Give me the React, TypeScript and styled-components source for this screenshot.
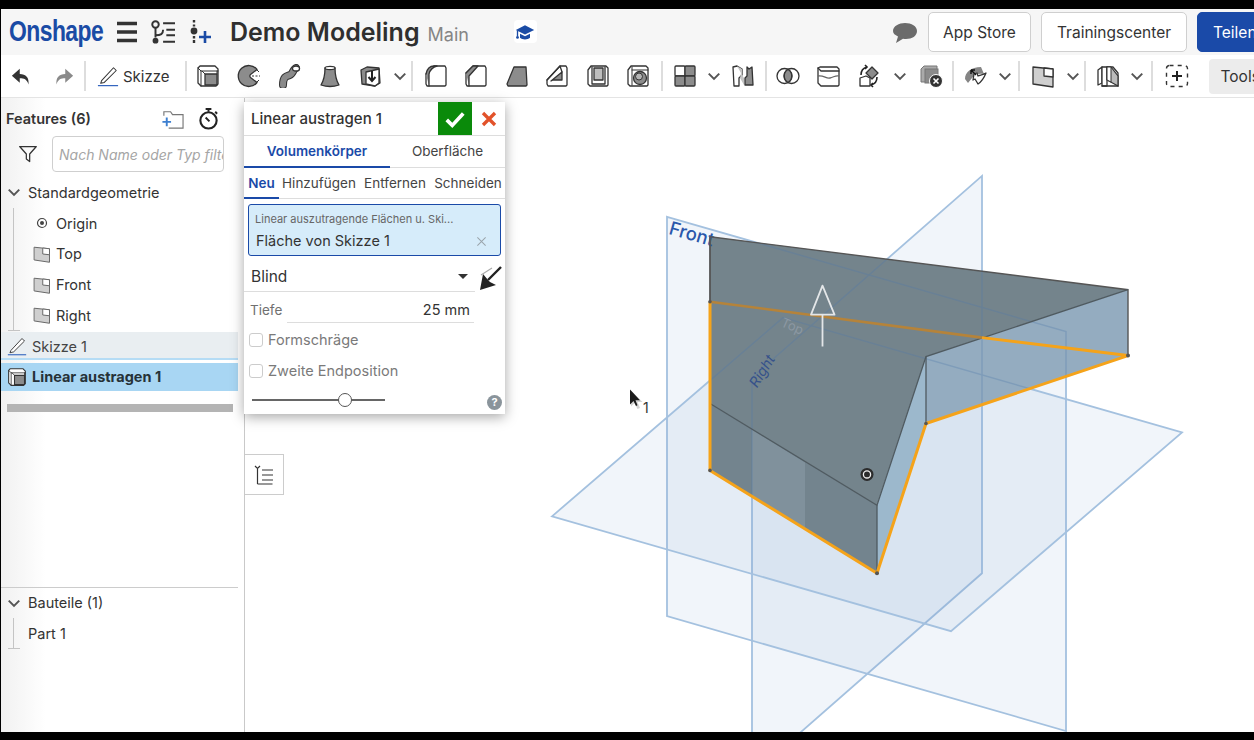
import React from 'react';
import styled, { createGlobalStyle } from 'styled-components';

const GlobalStyle = createGlobalStyle`
    html, body { margin: 0; padding: 0; background: #000; }
    body { font-family: Inter, "Noto Sans", "Liberation Sans", sans-serif; color: #333; }
    * { box-sizing: border-box; }
`;

const Page = styled.div`
    width: 1254px;
    height: 740px;
    padding: 9px 0 8px 1px;
    background: #000;
    display: flex;
    flex-direction: column;
    overflow: hidden;
`;

/* top bar */
const Header = styled.header`
    height: 46px;
    flex: none;
    background: #f6f6f6;
    display: flex;
    align-items: center;
    padding-left: 8px;
    white-space: nowrap;
    overflow: hidden;
`;
const Logo = styled.span`
    display: inline-block;
    width: 94px;
    flex: none;
    font-family: "Liberation Sans", sans-serif;
    font-size: 29px;
    font-weight: 700;
    color: #1a4ba5;
    letter-spacing: -0.7px;
    margin-top: -2px;
    transform: scaleX(0.79);
    transform-origin: left center;
`;
const HeaderIcon = styled.span<{ $left: number }>`
    display: flex;
    flex: none;
    margin-left: ${p => p.$left}px;
`;
const Title = styled.span`
    font-size: 25px;
    font-weight: 600;
    color: #2f2f2f;
    margin-left: 18px;
`;
const Branch = styled.span`
    font-size: 18px;
    color: #858585;
    margin-left: 8px;
    margin-top: 5px;
`;
const CapBox = styled.span`
    width: 23px;
    height: 23px;
    margin-left: 45px;
    margin-top: -1px;
    border-radius: 4px;
    background: #fff;
    display: flex;
    align-items: center;
    justify-content: center;
`;
const HeaderRight = styled.div`
    margin-left: auto;
    display: flex;
    align-items: center;
    gap: 10px;
    width: 362px;
    flex: none;
`;
const ChatIcon = styled.span`
    display: flex;
    margin: 0 1px 0 1px;
`;
const HeaderButton = styled.button<{ $width: number; $primary?: boolean }>`
    width: ${p => p.$width}px;
    height: 40px;
    flex: none;
    border: 1px solid ${p => (p.$primary ? '#1a4aa8' : '#cfcfcf')};
    border-radius: 5px;
    background: ${p => (p.$primary ? '#1a4aa8' : '#fff')};
    color: ${p => (p.$primary ? '#fff' : '#333')};
    font: 400 15.5px Inter, sans-serif;
    padding: ${p => (p.$primary ? '0 0 0 15px' : '0')};
    text-align: ${p => (p.$primary ? 'left' : 'center')};
    white-space: nowrap;
`;

/* toolbar */
const Toolbar = styled.div`
    height: 43px;
    flex: none;
    background: #fff;
    display: flex;
    align-items: center;
    white-space: nowrap;
    overflow: hidden;
    border-bottom: 1px solid #e4e4e4;
`;
const ToolSlot = styled.span<{ $width?: number }>`
    width: ${p => p.$width ?? 40.5}px;
    height: 30px;
    flex: none;
    display: flex;
    align-items: center;
    justify-content: center;
`;
const Separator = styled.span<{ $gap?: number }>`
    width: 2px;
    height: 30px;
    flex: none;
    background: #ddd;
    margin: 0 ${p => p.$gap ?? 2}px;
`;
const SketchButton = styled.span`
    width: 98px;
    flex: none;
    display: flex;
    align-items: center;
    gap: 4px;
    padding-left: 11px;
    font-size: 15px;
    color: #333;
`;
const ToolsButton = styled.span`
    margin-left: 11px;
    width: 60px;
    height: 35px;
    flex: none;
    padding: 8px 0 0 12px;
    background: #ececec;
    border-radius: 4px 0 0 4px;
    font-size: 15.5px;
`;

/* main area */
const Main = styled.main`
    flex: 1;
    min-height: 0;
    display: flex;
    position: relative;
`;
const Sidebar = styled.aside`
    width: 244px;
    flex: none;
    display: flex;
    flex-direction: column;
    background: linear-gradient(90deg, #f1f1f1 0, #fff 45px);
    border-right: 1px solid #c9c9c9;
    font-size: 14.5px;
    padding-right: 6px;
`;
const SidebarHead = styled.div`
    height: 38px;
    display: flex;
    align-items: center;
    padding: 2px 18px 0 5px;
    font-weight: 600;
    color: #333;
`;
const HeadLabel = styled.span`
    flex: 1;
`;
const FilterRow = styled.div`
    height: 36px;
    display: flex;
    align-items: center;
    gap: 14px;
    padding-left: 17px;
`;
const FilterBox = styled.div`
    width: 172px;
    height: 36px;
    border: 1px solid #cfcfcf;
    border-radius: 4px;
    padding: 9px 6px;
    font-size: 14px;
    line-height: 17px;
    font-style: italic;
    color: #a5a5a5;
    background: #fff;
    overflow: hidden;
    white-space: nowrap;
`;
const TreeSection = styled.div`
    margin-top: 5px;
`;
const Row = styled.div<{ $indent?: number }>`
    height: 30.75px;
    display: flex;
    align-items: center;
    padding-left: ${p => p.$indent ?? 0}px;
    color: #333;
`;
const TreeGroup = styled.div`
    position: relative;
    &::before {
        content: '';
        position: absolute;
        left: 12px;
        top: 0;
        bottom: 0;
        width: 1px;
        background: #c4c4c4;
    }
    &::after {
        content: '';
        position: absolute;
        left: 7px;
        bottom: 0;
        width: 12px;
        height: 1px;
        background: #c4c4c4;
    }
`;
const RowIcon = styled.span<{ $width: number; $gap: number }>`
    width: ${p => p.$width}px;
    margin-right: ${p => p.$gap}px;
    flex: none;
    display: flex;
    align-items: center;
    justify-content: center;
`;
const FeatureRow = styled.div<{ $selected?: boolean }>`
    height: 28px;
    display: flex;
    align-items: center;
    gap: 5px;
    padding: ${p => (p.$selected ? '0' : '3px')} 0 0 6px;
    margin-top: ${p => (p.$selected ? 3 : 1)}px;
    background: ${p => (p.$selected ? '#a8d6f3' : '#e9eef1')};
    border-bottom: ${p => (p.$selected ? 'none' : '2px solid #b5dcf5')};
    font-weight: ${p => (p.$selected ? 700 : 400)};
    color: ${p => (p.$selected ? '#263238' : '#444')};
`;
const ScrollTrack = styled.div`
    height: 8px;
    margin: 13px 5px 0 6px;
    background: #b4b4b4;
`;
const PartsSection = styled.div`
    margin-top: auto;
    padding-bottom: 83px;
    border-top: 1px solid #ccc;
`;

/* dialog */
const Dialog = styled.section`
    position: absolute;
    left: 243px;
    top: 4px;
    width: 261px;
    height: 312px;
    background: #fff;
    box-shadow: 0 3px 12px rgba(0, 0, 0, 0.35);
    z-index: 2;
    display: flex;
    flex-direction: column;
`;
const DialogTitle = styled.div`
    height: 34px;
    flex: none;
    display: flex;
    align-items: center;
    padding-left: 7px;
    border-bottom: 1px solid #ddd;
    font-size: 15px;
    font-weight: 500;
    color: #333;
`;
const DialogName = styled.span`
    flex: 1;
`;
const Accept = styled.span`
    width: 34px;
    height: 33px;
    background: #0a8a0a;
    display: flex;
    align-items: center;
    justify-content: center;
`;
const Cancel = styled.span`
    width: 33px;
    display: flex;
    align-items: center;
    justify-content: center;
`;
const TabRow = styled.div<{ $height: number }>`
    height: ${p => p.$height}px;
    flex: none;
    display: flex;
    border-bottom: 1px solid #ddd;
    font-size: 13.5px;
`;
const Tab = styled.span<{ $width: number; $active?: boolean }>`
    width: ${p => p.$width}px;
    flex: none;
    display: flex;
    align-items: center;
    justify-content: center;
    margin-bottom: -1px;
    white-space: nowrap;
    color: ${p => (p.$active ? '#1a4aa8' : '#444')};
    font-weight: ${p => (p.$active ? 600 : 400)};
    border-bottom: 2px solid ${p => (p.$active ? '#1a4aa8' : 'transparent')};
`;
const QueryBox = styled.div`
    margin: 5px 4px 0 4px;
    height: 52px;
    flex: none;
    background: #d6ecfa;
    border: 1px solid #1a4aa8;
    border-radius: 3px;
    padding: 7px 6px 0 6px;
`;
const QueryLabel = styled.div`
    font-size: 11px;
    color: #666;
    line-height: 14px;
`;
const QueryValue = styled.div`
    margin-top: 6px;
    display: flex;
    justify-content: space-between;
    align-items: center;
    font-size: 14.5px;
    line-height: 18px;
    color: #333;
    padding: 0 7px 0 1px;
`;
const SelectRow = styled.div`
    height: 36px;
    flex: none;
    display: flex;
    align-items: center;
    font-size: 15.5px;
    color: #333;
`;
const SelectValue = styled.span`
    position: relative;
    width: 231px;
    height: 36px;
    line-height: 42px;
    padding-left: 7px;
    border-bottom: 1px solid #ddd;
`;
const Caret = styled.span`
    position: absolute;
    right: 7px;
    top: 18px;
    width: 0;
    height: 0;
    border-left: 5px solid transparent;
    border-right: 5px solid transparent;
    border-top: 5px solid #333;
`;
const ArrowFlip = styled.span`
    display: flex;
    margin: 8px 0 0 3px;
`;
const DepthRow = styled.div`
    height: 31px;
    flex: none;
    display: flex;
    align-items: flex-start;
    padding-left: 6px;
`;
const DepthLabel = styled.span`
    width: 37px;
    padding-top: 8px;
    line-height: 20px;
    font-size: 13.5px;
    color: #707070;
`;
const DepthInput = styled.span`
    width: 187px;
    height: 31px;
    padding: 8px 4px 0 0;
    line-height: 20px;
    text-align: right;
    border-bottom: 1px solid #ddd;
    font-size: 14.5px;
    color: #333;
`;
const CheckGroup = styled.div`
    margin-top: 1px;
    flex: none;
`;
const CheckRow = styled.label`
    height: 31px;
    display: flex;
    align-items: center;
    gap: 5px;
    padding-left: 5px;
    font-size: 14.5px;
    color: #7a7a7a;
`;
const CheckBox = styled.span`
    width: 14px;
    height: 14px;
    border: 1px solid #ccc;
    border-radius: 3px;
    background: #fff;
`;
const SliderRow = styled.div`
    flex: 1;
    display: flex;
    align-items: center;
    justify-content: space-between;
    padding: 0 3px 0 8px;
`;
const Slider = styled.div`
    width: 133px;
    height: 2px;
    background: #666;
    position: relative;
`;
const SliderKnob = styled.span`
    position: absolute;
    left: 86px;
    top: -6px;
    width: 14px;
    height: 14px;
    border-radius: 50%;
    background: #fff;
    border: 1.5px solid #555;
`;
const HelpDot = styled.span`
    width: 15px;
    height: 15px;
    margin-top: 5px;
    border-radius: 50%;
    background: #8a949b;
    color: #fff;
    font-size: 11px;
    font-weight: 700;
    line-height: 15px;
    text-align: center;
`;
const ListTab = styled.div`
    position: absolute;
    left: 244px;
    top: 356px;
    width: 39px;
    height: 41px;
    border: 1px solid #ccc;
    border-left: none;
    background: #fff;
    display: flex;
    align-items: center;
    justify-content: center;
    z-index: 1;
`;

/* 3D viewport */
const Viewport = styled.div`
    flex: 1;
    position: relative;
    background: #fff;
    overflow: hidden;
`;
const Scene = styled.svg`
    position: absolute;
    inset: 0;
    width: 100%;
    height: 100%;
`;
const IconSvg = styled.svg`
    flex: none;
`;

const stroke = { fill: 'none', stroke: '#333', strokeWidth: 1.3, strokeLinejoin: 'round' as const, strokeLinecap: 'round' as const };
const face = { ...stroke, fill: '#fff' };
const grey = { ...stroke, fill: '#8c8c8c' };

const Ico: React.FC<{ size?: number; children: React.ReactNode }> = ({ size = 24, children }) => (
    <IconSvg width={size} height={size} viewBox="0 0 24 24">{children}</IconSvg>
);

const PlaneIcon = () => (
    <Ico size={18}>
        <path d="M2 3l20 2v18L2 20z" {...stroke} stroke="#666" fill="#cfcfcf" />
        <path d="M13 4l9 1v8l-9-1z" fill="#fff" stroke="#666" strokeWidth={1.3} />
    </Ico>
);
const PencilIcon: React.FC<{ size?: number }> = ({ size = 22 }) => (
    <Ico size={size}>
        <path d="M5 17L18 3l3 3L8 19l-4 1z" {...stroke} strokeWidth={1.1} fill="#fff" />
        <path d="M1 22.5h22" stroke="#2f62bd" strokeWidth={1.3} />
    </Ico>
);
const ExtrudeIcon: React.FC<{ size?: number }> = ({ size = 24 }) => (
    <Ico size={size}>
        <path d="M4 2h15l3 3v15l-2 2H5l-3-3V4z" {...face} />
        <path d="M2 4l3 3v15M5 7h17" {...stroke} strokeWidth={1} />
        <rect x="9" y="10" width="12" height="11" {...grey} />
        <path d="M6 7l3 3M21 7v3" {...stroke} strokeWidth={1} />
    </Ico>
);
const Chevron: React.FC<{ size?: number }> = ({ size = 14 }) => (
    <Ico size={size}>
        <path d="M3 8l9 9 9-9" fill="none" stroke="#555" strokeWidth={3.4} />
    </Ico>
);
const BoxBase = () => <path d="M5 2h15l2 2v17l-1 1H4l-2-2V6z" {...face} />;

type Tool =
    | { kind: 'icon'; node: React.ReactNode }
    | { kind: 'chevron'; width: number }
    | { kind: 'sep'; gap?: number };
const tool = (node: React.ReactNode): Tool => ({ kind: 'icon', node });
const chevron = (width = 18): Tool => ({ kind: 'chevron', width });
const sep = (gap?: number): Tool => ({ kind: 'sep', gap });

const tools: Tool[] = [
    tool(<ExtrudeIcon />),
    tool(<Ico><path d="M20 5.5A10.5 10.5 0 1 0 20 18.5L13.5 13.5a2 2 0 0 1 0-3z" {...grey} /><path d="M15 12h8" stroke="#333" strokeDasharray="2 1.5" /><path d="M19 5l3 3M19 19l3-3" stroke="#333" /></Ico>),
    tool(<Ico><path d="M6 21c0-9 4-9 7-10s3-6 6-7" fill="none" stroke="#333" strokeWidth={8} strokeLinecap="round" /><path d="M6 21c0-9 4-9 7-10s3-6 6-7" fill="none" stroke="#8a8a8a" strokeWidth={6} strokeLinecap="round" /><ellipse cx="19" cy="4.5" rx="3.5" ry="2.5" {...face} /></Ico>),
    tool(<Ico><path d="M7 4c0 7-1 12-4 17 6 2 12 2 18 0-3-5-4-10-4-17z" {...grey} /><ellipse cx="12" cy="4" rx="5" ry="1.6" {...face} /></Ico>),
    tool(<Ico><path d="M3 6l6-3 12 1 1 15-5 3-13-2z" {...grey} /><path d="M8 8l13-3v14l-4 3-9-2z" {...face} /><path d="M14 7v9M10.5 13l3.5 4 3.5-4" fill="none" stroke="#222" strokeWidth={2} /></Ico>),
    chevron(),
    sep(2.5),
    tool(<Ico><path d="M10 2h11l1 2v17l-1 1H3l-1-2V10z" {...face} /><path d="M2 10c1-5 4-8 8-8h3c-4 1-7 4-8 8v12" {...grey} /></Ico>),
    tool(<Ico><path d="M9 2h12l1 2v17l-1 1H3l-1-2V9z" {...face} /><path d="M2 9l7-7h5L5 12v10" {...grey} /></Ico>),
    tool(<Ico><path d="M9 3h12l1 18-1 1H3l-1-2z" {...grey} /></Ico>),
    tool(<Ico><path d="M15 2h6l1 2v17l-1 1H3l-1-2v-4z" {...face} /><path d="M6 17l11-9v8H8z" {...grey} /><path d="M2 16l13-14 2 6" {...stroke} /></Ico>),
    tool(<Ico><BoxBase /><path d="M6 3v17h13V3" {...stroke} /><path d="M8 4h9v12H8z" {...grey} fill="#bdbdbd" /></Ico>),
    tool(<Ico><BoxBase /><path d="M6 3v18M6 6h16" {...stroke} strokeWidth={1} /><circle cx="14" cy="14" r="6.5" {...grey} /><circle cx="13" cy="12.5" r="3.5" fill="#b5b5b5" stroke="#333" /></Ico>),
    sep(2),
    tool(<Ico><rect x="2" y="2" width="10" height="10" rx="1" {...face} /><rect x="12" y="2" width="10" height="10" rx="1" {...grey} /><rect x="2" y="12" width="10" height="10" rx="1" {...grey} /><rect x="12" y="12" width="10" height="10" rx="1" {...grey} /></Ico>),
    chevron(),
    tool(<Ico><path d="M2 3l4-1 5 3v6l-3 3v8H3z" {...face} /><path d="M6 2l5 3v6l2 3v7l-4-7 1-5z" fill="#c4c4c4" /><path d="M14 21v-7l2-2V3l2 2 3-2 1 18z" {...grey} /></Ico>),
    sep(1),
    tool(<Ico><circle cx="8.5" cy="12" r="7.5" {...face} /><circle cx="15.5" cy="12" r="7.5" {...stroke} /><path d="M12 5.5a7.5 7.5 0 0 1 0 13 7.5 7.5 0 0 1 0-13z" {...grey} /></Ico>),
    tool(<Ico><path d="M4 3h17l2 2v16l-1 1H5l-3-3V4z" {...face} /><path d="M2 4l3 3h18" {...stroke} /><path d="M2 12c6-1 8 3 12 2s6-3 9-2" fill="none" stroke="#666" strokeWidth={1.3} /></Ico>),
    tool(<Ico><path d="M3 14l6-2 4 2v8H3z" {...face} /><path d="M15 3l6 6-6 6-6-6z" {...grey} /><path d="M4 11c0-4 2-7 6-8M20 13c0 4-2 7-6 8" fill="none" stroke="#222" strokeWidth={1.6} /><path d="M8 1l2 2-2 2M16 19l-2 2 2 2" fill="none" stroke="#222" strokeWidth={1.6} /></Ico>),
    chevron(22),
    tool(<Ico><path d="M2 5l3-3h13v6H7v10H2z" fill="#aaa" stroke="#777" /><rect x="6" y="5" width="13" height="14" fill="#8b8b8b" stroke="#777" /><circle cx="17" cy="17" r="6.5" fill="#333" stroke="#fff" /><path d="M14.5 14.5l5 5M19.5 14.5l-5 5" stroke="#fff" strokeWidth={1.6} /></Ico>),
    sep(0.5),
    tool(<Ico><path d="M2 15C2 8 8 3 18 3l3 7c-6-1-10 1-12 4l-4 5z" fill="#858585" /><path d="M11 10l-1 6 2-1 3 5c3-2 6-6 8-11-3 2-6 2-8 3l-1-3z" {...face} /><path d="M8 6l5 5M8 6v4M8 6h4" stroke="#111" strokeWidth={1.4} fill="none" /></Ico>),
    chevron(20),
    sep(3),
    tool(<Ico><path d="M2 3l20 2v18L2 20z" {...stroke} fill="#cfcfcf" /><path d="M13 4l9 1v8l-9-1z" {...face} /></Ico>),
    chevron(),
    sep(2),
    tool(<Ico><path d="M2 6l4-3v16l-4 2z" {...face} /><path d="M6 3l11 0 5 6v13H6z" {...face} /><path d="M11 3v13l11 6V12L15 3z" fill="#bbb" stroke="#333" strokeWidth={1.2} /><path d="M11 3v19h-5" {...stroke} /><path d="M15 3h-4v13l4 2z" fill="#fff" stroke="#333" strokeWidth={1} /></Ico>),
    chevron(),
    sep(4.5),
    tool(<Ico><rect x="1.5" y="1.5" width="21" height="21" rx="3" fill="none" stroke="#333" strokeWidth={1.4} strokeDasharray="4 4.2" /><path d="M12 7v10M7 12h10" stroke="#222" strokeWidth={2} /></Ico>),
];

const Toolset: React.FC = () => (
    <>
        {tools.map((item, index) => {
            if (item.kind === 'sep') return <Separator key={index} $gap={item.gap} />;
            if (item.kind === 'chevron') return <ToolSlot key={index} $width={item.width}><Chevron /></ToolSlot>;
            return <ToolSlot key={index}>{item.node}</ToolSlot>;
        })}
    </>
);

const planeLine = '#a4c1df';
const planes = [
    '982,175 982,573 752,775 752,377',
    '667,216 1066,331 1066,731 667,616',
    '552,516 783,317 1182,432 951,631',
];

const Model: React.FC = () => (
    <Scene viewBox="245 97 1009 635" preserveAspectRatio="none">
        <defs>
            <clipPath id="solid-outline">
                <polygon points="710,236 1128,289 1128,355 926,423 877,573 710,470" />
            </clipPath>
        </defs>
        {planes.map(points => (
            <polygon key={points} points={points} fill="rgba(130,165,205,0.11)" stroke={planeLine} strokeWidth={1.8} />
        ))}

        <g>
            <polygon points="710,236 1128,289 926,356 877,505 710,403" fill="#75858d" />
            <polygon points="710,403 877,505 877,573 710,470" fill="#73858f" />
            <polygon points="926,356 1128,289 1128,355 926,423" fill="#94adc0" />
            <polygon points="926,356 926,423 877,573 877,505" fill="#9cb8cc" />
        </g>
        <polygon points="752,429 805,462 805,528 752,496" fill="#8496a1" opacity={0.75} />
        <g clipPath="url(#solid-outline)" opacity={0.3}>
            {planes.map(points => (
                <polygon key={points} points={points} fill="none" stroke="#4f78a8" strokeWidth={1.5} />
            ))}
        </g>
        <text x="668" y="233" transform="rotate(16 668 233)" fontFamily="Inter, sans-serif" fontSize="18.5" fontWeight="500" fill="#2a57ab">Front</text>
        <polyline points="710,236 1128,289 1128,355" fill="none" stroke="#555" strokeWidth={1.4} />
        <polyline points="710,301 710,236" fill="none" stroke="#555" strokeWidth={1.8} />
        <polyline points="710,403 877,505 926,356 1128,289" fill="none" stroke="#4f5a60" strokeWidth={1.3} />
        <path d="M877 505V573M926 356V423" stroke="#4f5a60" strokeWidth={1.3} />
        <text x="780" y="325" transform="rotate(24 780 325)" fontFamily="Inter, sans-serif" fontSize="13" fill="#8c98a3">Top</text>
        <text x="757" y="388" transform="rotate(-58 757 388)" fontFamily="Inter, sans-serif" fontSize="14.5" fontStyle="italic" fill="#36528a">Right</text>

        <polyline points="710,301 982,337" fill="none" stroke="#b5833a" strokeWidth={2.6} />
        <polyline points="982,337 1128,355 926,423 877,573 710,470 710,301" fill="none" stroke="#f5a31a" strokeWidth={3} strokeLinejoin="round" />
        <g fill="#555">
            <circle cx="710" cy="301" r="1.8" />
            <circle cx="1128" cy="355" r="2" />
            <circle cx="926" cy="423" r="1.8" />
            <circle cx="877" cy="573" r="2" />
            <circle cx="710" cy="470" r="1.8" />
        </g>
        <path d="M822.5 285L811 314H834.5ZM822.5 314V346" fill="none" stroke="#e3e6e8" strokeWidth={1.8} strokeLinejoin="round" />
        <circle cx="867" cy="474" r="6.5" fill="#2b2b2b" />
        <circle cx="867" cy="474" r="3.6" fill="none" stroke="#eee" strokeWidth={1.3} />

        <path d="M630 389v16l3.5-3.5 3 6 2.5-1-2.5-6h5z" fill="#b8b8b8" transform="translate(1 1)" opacity={0.6} />
        <path d="M630 389v15l3.5-3.500 2.5 5 1.5-.8-2-5h4.500z" fill="#1b1b1b" />
        <text x="643" y="413" fontFamily="Inter, sans-serif" fontSize="14" fill="#333">1</text>
    </Scene>
);

export default function App() {
    return (
        <Page>
            <GlobalStyle />
            <Header>
                <Logo>Onshape</Logo>
                <HeaderIcon $left={12}>
                    <Ico>
                        <path d="M2 3.5h20M2 12h20M2 20.5h20" stroke="#333" strokeWidth={3.4} />
                    </Ico>
                </HeaderIcon>
                <HeaderIcon $left={10}>
                    <Ico size={26}>
                        <circle cx="6" cy="5" r="3" fill="none" stroke="#333" strokeWidth={1.8} />
                        <circle cx="6" cy="20" r="2.7" fill="#333" />
                        <path d="M6 8v9M6 15c5 0 7-1 7-5" fill="none" stroke="#333" strokeWidth={1.8} />
                        <path d="M13 4h11M16 10h8M16 15h8M13 21h11" stroke="#333" strokeWidth={1.8} />
                    </Ico>
                </HeaderIcon>
                <HeaderIcon $left={13}>
                    <Ico>
                        <circle cx="6" cy="11" r="3.4" fill="#333" />
                        <path d="M6 0v2.5M6 4.5v2M6 16v2.5M6 20v3" stroke="#333" strokeWidth={2.4} />
                        <path d="M17 11v12M11 17h12" stroke="#1a4ba5" strokeWidth={2.6} />
                    </Ico>
                </HeaderIcon>
                <Title>Demo Modeling</Title>
                <Branch>Main</Branch>
                <CapBox>
                    <Ico size={20}>
                        <path d="M12 4L1 9.5 12 15l11-5.5z" fill="#1a4ba5" />
                        <path d="M6 14v5c3 2.5 9 2.5 12 0v-5l-6 3z" fill="#1a4ba5" />
                        <path d="M3 10v7" stroke="#1a4ba5" strokeWidth={1.6} />
                        <circle cx="3" cy="18.5" r="1.7" fill="#1a4ba5" />
                    </Ico>
                </CapBox>
                <HeaderRight>
                    <ChatIcon>
                        <Ico>
                            <path d="M12 3c6.5 0 12 3 12 8s-5 8-11 8c-1 0-2 0-3-.3L3 23l2-6.5C2 15 0 13.5 0 11c0-5 6-8 12-8z" fill="#6b6b6b" />
                        </Ico>
                    </ChatIcon>
                    <HeaderButton $width={103}>App Store</HeaderButton>
                    <HeaderButton $width={146}>Trainingscenter</HeaderButton>
                    <HeaderButton $width={70} $primary>Teilen</HeaderButton>
                </HeaderRight>
            </Header>
            <Toolbar>
                <ToolSlot $width={41}>
                    <Ico size={21}><path d="M10 3L1 11l9 8v-5c5 0 8 1 10 7 1-8-3-12-10-12z" fill="#333" /></Ico>
                </ToolSlot>
                <ToolSlot $width={42}>
                    <Ico size={21}><path d="M14 3l9 8-9 8v-5c-5 0-8 1-10 7-1-8 3-12 10-12z" fill="#8a8a8a" /></Ico>
                </ToolSlot>
                <Separator $gap={0} />
                <SketchButton><PencilIcon />Skizze</SketchButton>
                <Separator $gap={1} />
                <Toolset />
                <ToolsButton>Tools</ToolsButton>
            </Toolbar>
            <Main>
                <Sidebar>
                    <SidebarHead>
                        <HeadLabel>Features (6)</HeadLabel>
                        <HeaderIcon $left={0}>
                            <Ico size={23}>
                                <path d="M3 9V5h7l2 3h11v14H8" fill="none" stroke="#777" strokeWidth={1.2} />
                                <path d="M6 11v9M1.5 15.5h9" stroke="#3d7fd0" strokeWidth={2} />
                            </Ico>
                        </HeaderIcon>
                        <HeaderIcon $left={13}>
                            <Ico size={23}>
                                <circle cx="12" cy="14" r="8.5" fill="none" stroke="#222" strokeWidth={2.2} />
                                <path d="M9 2h6M12 2v3M19 5l2 2M9 11l4 4" fill="none" stroke="#222" strokeWidth={2} />
                            </Ico>
                        </HeaderIcon>
                    </SidebarHead>
                    <FilterRow>
                        <Ico size={20}><path d="M2 3h20l-8 9v9l-4-3v-6z" fill="none" stroke="#333" strokeWidth={1.5} strokeLinejoin="round" /></Ico>
                        <FilterBox>Nach Name oder Typ filte</FilterBox>
                    </FilterRow>
                    <TreeSection>
                        <Row $indent={5}><RowIcon $width={15} $gap={7}><Chevron /></RowIcon>Standardgeometrie</Row>
                        <TreeGroup>
                            <Row $indent={32}>
                                <RowIcon $width={18} $gap={5}>
                                    <Ico size={12}><circle cx="12" cy="12" r="9" fill="none" stroke="#444" strokeWidth={2.4} /><circle cx="12" cy="12" r="4" fill="#444" /></Ico>
                                </RowIcon>
                                Origin
                            </Row>
                            {['Top', 'Front', 'Right'].map(name => (
                                <Row key={name} $indent={32}>
                                    <RowIcon $width={18} $gap={5}><PlaneIcon /></RowIcon>
                                    {name}
                                </Row>
                            ))}
                        </TreeGroup>
                        <FeatureRow><PencilIcon size={20} />Skizze 1</FeatureRow>
                        <FeatureRow $selected><ExtrudeIcon size={20} />Linear austragen 1</FeatureRow>
                    </TreeSection>
                    <ScrollTrack />
                    <PartsSection>
                        <Row $indent={5}><RowIcon $width={15} $gap={7}><Chevron /></RowIcon>Bauteile (1)</Row>
                        <TreeGroup>
                            <Row $indent={27}>Part 1</Row>
                        </TreeGroup>
                    </PartsSection>
                </Sidebar>
                <Viewport><Model /></Viewport>
                <Dialog>
                    <DialogTitle>
                        <DialogName>Linear austragen 1</DialogName>
                        <Accept>
                            <Ico size={22}><path d="M3 13l6 6L21 6" fill="none" stroke="#fff" strokeWidth={4} /></Ico>
                        </Accept>
                        <Cancel>
                            <Ico size={18}><path d="M4 4l16 16M20 4L4 20" stroke="#e2522a" strokeWidth={4.4} /></Ico>
                        </Cancel>
                    </DialogTitle>
                    <TabRow $height={32}>
                        <Tab $width={146} $active>Volumenkörper</Tab>
                        <Tab $width={115}>Oberfläche</Tab>
                    </TabRow>
                    <TabRow $height={31}>
                        <Tab $width={35} $active>Neu</Tab>
                        <Tab $width={80}>Hinzufügen</Tab>
                        <Tab $width={72}>Entfernen</Tab>
                        <Tab $width={74}>Schneiden</Tab>
                    </TabRow>
                    <QueryBox>
                        <QueryLabel>Linear auszutragende Flächen u. Ski...</QueryLabel>
                        <QueryValue>
                            Fläche von Skizze 1
                            <Ico size={11}><path d="M3 3l18 18M21 3L3 21" stroke="#9aa4ab" strokeWidth={2.2} /></Ico>
                        </QueryValue>
                    </QueryBox>
                    <SelectRow>
                        <SelectValue>Blind<Caret /></SelectValue>
                        <ArrowFlip>
                            <Ico size={24}>
                                <path d="M23 1L10 14" stroke="#222" strokeWidth={2.4} />
                                <path d="M2 24L5 8l5 6 2 2 6 3z" fill="#222" />
                                <path d="M3 9L14 2" stroke="#aaa" strokeWidth={1.2} />
                            </Ico>
                        </ArrowFlip>
                    </SelectRow>
                    <DepthRow>
                        <DepthLabel>Tiefe</DepthLabel>
                        <DepthInput>25 mm</DepthInput>
                    </DepthRow>
                    <CheckGroup>
                        <CheckRow><CheckBox />Formschräge</CheckRow>
                        <CheckRow><CheckBox />Zweite Endposition</CheckRow>
                    </CheckGroup>
                    <SliderRow>
                        <Slider><SliderKnob /></Slider>
                        <HelpDot>?</HelpDot>
                    </SliderRow>
                </Dialog>
                <ListTab>
                    <Ico>
                        <path d="M3 3l2.5 2.5L8 3M5.5 6v15M5.5 21h15M10 7h11M10 12h11M10 17h11" fill="none" stroke="#333" strokeWidth={1.2} />
                    </Ico>
                </ListTab>
            </Main>
        </Page>
    );
}
